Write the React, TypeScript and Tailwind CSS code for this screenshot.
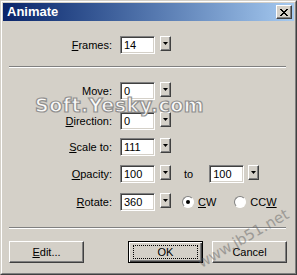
import React from "react";

const font = { fontFamily: '"Liberation Sans", Arial, sans-serif' };

function Field({ value }: { value: string }) {
  return (
    <div className="h-[18px] w-[35px] bg-white border border-t-[#808080] border-l-[#808080] border-b-white border-r-white shadow-[inset_1px_1px_0_#404040,inset_-1px_-1px_0_#d4d0c8] pl-[3px] pt-[2px] text-[11px] leading-[13px] text-black">
      {value}
    </div>
  );
}

function DropBtn() {
  return (
    <div className="h-[15px] w-[11px] bg-[#d4d0c8] border border-t-white border-l-white border-b-[#404040] border-r-[#404040] shadow-[inset_-1px_-1px_0_#808080] flex items-center justify-center self-start">
      <svg width="5" height="3" viewBox="0 0 5 3">
        <path d="M0 0h5L2.5 3z" fill="#000" />
      </svg>
    </div>
  );
}

function Label({ pre = "", u, post }: { pre?: string; u: string; post: string }) {
  return (
    <div className="w-[112px] text-right pr-[1px] text-[11px] text-black">
      {pre}
      <span className="underline underline-offset-1">{u}</span>
      {post}
    </div>
  );
}

function Row({ children, className = "" }: { children: React.ReactNode; className?: string }) {
  return <div className={`flex items-center h-[18px] ${className}`}>{children}</div>;
}

function Combo({ value }: { value: string }) {
  return (
    <div className="flex gap-[5px] items-start ml-[7px]">
      <Field value={value} />
      <DropBtn />
    </div>
  );
}

function Radio({ checked }: { checked?: boolean }) {
  return (
    <div className="relative w-[12px] h-[12px] rounded-full bg-white border border-t-[#808080] border-l-[#808080] border-b-white border-r-white flex items-center justify-center">
      {checked && <div className="w-[4px] h-[4px] rounded-full bg-black" />}
    </div>
  );
}

function Separator({ className = "" }: { className?: string }) {
  return (
    <div className={`mx-[8px] w-[277px] ${className}`}>
      <div className="h-px bg-[#808080]" />
      <div className="h-px bg-white" />
    </div>
  );
}

function Button({ children, def }: { children: React.ReactNode; def?: boolean }) {
  return (
    <div
      className={`h-[22px] w-[75px] bg-[#d4d0c8] flex items-center justify-center text-[11px] text-black ${
        def
          ? "border border-black shadow-[inset_1px_1px_0_#fff,inset_-1px_-1px_0_#404040,inset_-2px_-2px_0_#808080]"
          : "border border-t-white border-l-white border-b-[#404040] border-r-[#404040] shadow-[inset_-1px_-1px_0_#808080]"
      }`}
    >
      {def ? (
        <div className="w-[65px] h-[14px] border border-dotted border-black flex items-center justify-center">
          {children}
        </div>
      ) : (
        children
      )}
    </div>
  );
}

export default function App() {
  return (
    <div
      className="relative w-[297px] h-[275px] bg-[#d4d0c8] overflow-hidden border border-t-[#d4d0c8] border-l-[#d4d0c8] border-b-[#404040] border-r-[#404040]"
      style={font}
    >
      <div className="absolute inset-0 border border-t-white border-l-white border-b-[#808080] border-r-[#808080] pointer-events-none" />
      {/* title bar */}
      <div className="mx-[2px] mt-[2px] h-[18px] bg-gradient-to-r from-[#0a246a] to-[#a6caf0] flex items-center justify-between pl-[4px] pr-[2px]">
        <span className="text-white font-bold text-[13px]">Animate</span>
        <div className="w-[16px] h-[14px] bg-[#d4d0c8] border border-t-white border-l-white border-b-[#404040] border-r-[#404040] shadow-[inset_-1px_-1px_0_#808080] flex items-center justify-center">
          <svg width="8" height="7" viewBox="0 0 8 7">
            <path d="M0 0L7 7M1 0L8 7M7 0L0 7M8 0L1 7" stroke="#000" strokeWidth="1" />
          </svg>
        </div>
      </div>

      <Row className="mt-[15px]">
        <Label u="F" post="rames:" />
        <Combo value="14" />
      </Row>

      <Separator className="mt-[12px]" />

      <Row className="mt-[14px]">
        <Label pre="Move:" u="" post="" />
        <Combo value="0" />
      </Row>
      <Row className="mt-[12px]">
        <Label u="D" post="irection:" />
        <Combo value="0" />
      </Row>
      <Row className="mt-[8px]">
        <Label u="S" post="cale to:" />
        <Combo value="111" />
      </Row>
      <Row className="mt-[9px]">
        <Label u="O" post="pacity:" />
        <Combo value="100" />
        <span className="ml-[13px] text-[11px]">to</span>
        <div className="ml-[16px]">
          <div className="flex gap-[4px] items-start">
            <Field value="100" />
            <DropBtn />
          </div>
        </div>
      </Row>
      <Row className="mt-[10px]">
        <Label u="R" post="otate:" />
        <Combo value="360" />
        <div className="ml-[11px] flex items-center gap-[4px] text-[11px]">
          <Radio checked />
          <span>
            <span className="underline">C</span>W
          </span>
        </div>
        <div className="ml-[18px] flex items-center gap-[4px] text-[11px]">
          <Radio />
          <span>
            CC<span className="underline">W</span>
          </span>
        </div>
      </Row>

      <Separator className="mt-[16px]" />

      <div className="mt-[12px] flex px-[8px]">
        <Button>
          <span>
            <span className="underline">E</span>dit...
          </span>
        </Button>
        <div className="ml-[44px]">
          <Button def>OK</Button>
        </div>
        <div className="ml-[9px]">
          <Button>Cancel</Button>
        </div>
      </div>

      {/* watermarks */}
      <div
        className="absolute left-[34px] top-[90px] text-[19px] font-bold text-white pointer-events-none tracking-[0.5px]"
        style={{ fontFamily: '"DejaVu Sans", sans-serif', WebkitTextStroke: "1.2px #8a8a8a", opacity: 0.9 }}
      >
        Soft.Yesky.com
      </div>
      <div
        className="absolute left-[198px] top-[252px] text-[15px] text-[#666] pointer-events-none -rotate-[30deg] origin-left"
        style={{ fontFamily: '"DejaVu Sans", sans-serif', opacity: 0.5 }}
      >
        www.jb51.net
      </div>
    </div>
  );
}
